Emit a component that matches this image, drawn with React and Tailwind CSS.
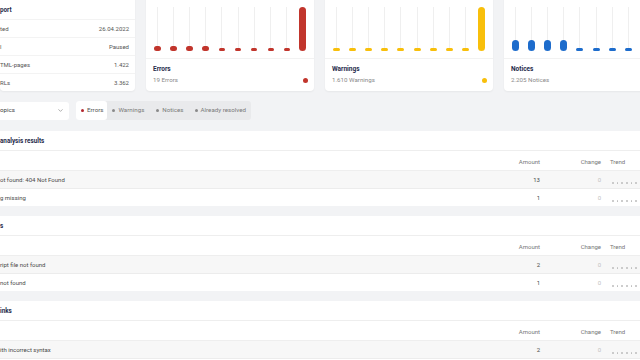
import { ChevronDown } from 'lucide-react';

const errorBars = [
  { h: 5, w: 7 }, { h: 5, w: 7 }, { h: 5, w: 7 }, { h: 5, w: 7 },
  { h: 3, w: 6 }, { h: 3, w: 6 }, { h: 3, w: 6 }, { h: 3, w: 6 }, { h: 3, w: 6 },
  { h: 44, w: 7 },
];
const warningBars = [
  { h: 3, w: 7 }, { h: 3, w: 7 }, { h: 3, w: 7 }, { h: 3, w: 7 }, { h: 3, w: 7 },
  { h: 3, w: 7 }, { h: 3, w: 7 }, { h: 3, w: 7 }, { h: 3, w: 7 },
  { h: 44, w: 7 },
];
const noticeBars = [
  { h: 11, w: 7 }, { h: 11, w: 7 }, { h: 11, w: 7 }, { h: 11, w: 7 },
  { h: 3, w: 7 }, { h: 3, w: 7 }, { h: 3, w: 7 }, { h: 3, w: 7 }, { h: 3, w: 7 }, { h: 3, w: 7 },
];

const sections = [
  {
    title: 'analysis results',
    rows: [
      { label: 'ot found: 404 Not Found', amount: 13, change: 0 },
      { label: 'g missing', amount: 1, change: 0 },
    ],
  },
  {
    title: 's',
    rows: [
      { label: 'ript file not found', amount: 2, change: 0 },
      { label: 'not found', amount: 1, change: 0 },
    ],
  },
  {
    title: 'inks',
    rows: [
      { label: 'ith incorrect syntax', amount: 2, change: 0 },
      { label: '', amount: '', change: '' },
    ],
  },
];

function Bars({ data, color }) {
  return (
    <div className="flex justify-between px-[7.5px] mt-[15px] pb-[7px] border-b border-[#f2f2f2]">
      {data.map((b, i) => (
        <div key={i} className="relative w-[7px] h-[44px] flex flex-col justify-end items-center">
          <div className="absolute top-0 bottom-[2px] left-[3px] w-px bg-[#efefef]" />
          <div className={`relative rounded-full ${color}`} style={{ height: b.h, width: b.w }} />
        </div>
      ))}
    </div>
  );
}

function StatCard({ title, sub, bars, color }) {
  return (
    <div className="w-[168px] h-[99px] shrink-0 bg-white rounded-[4px] shadow-[0_1px_2px_rgba(0,0,0,0.05)]">
      <Bars data={bars} color={color} />
      <div className="flex items-end justify-between pl-[7px] pr-[6.5px] pt-[5px]">
        <div>
          <div className="text-[6.5px] font-bold leading-[11px] text-[#1f2b4b]">{title}</div>
          <div className="text-[6.2px] leading-[11px] text-[#8a8a8a]">{sub}</div>
        </div>
        <span className={`w-[5px] h-[5px] rounded-full mb-[3px] ${color}`} />
      </div>
    </div>
  );
}

function TrendDots() {
  return (
    <div className="flex gap-[3.2px] mt-[7px] ml-[2px]">
      {[0, 1, 2, 3, 4, 5].map((i) => (
        <span key={i} className="w-[1.5px] h-[1.5px] rounded-full bg-[#bdbdbd]" />
      ))}
    </div>
  );
}

function Section({ title, rows }) {
  return (
    <div className="bg-white">
      <div className="h-[20px] flex items-center pt-[3px] border-b border-[#eeeeee] text-[6.3px] font-bold text-[#1f2b4b]">
        {title}
      </div>
      <div className="h-[20px] flex items-center pt-[2px] border-b border-[#eeeeee] text-[6px] text-[#777]">
        <div className="flex-1" />
        <div className="w-[60px] text-right">Amount</div>
        <div className="w-[61px] text-right">Change</div>
        <div className="w-[39px] pl-[9px]">Trend</div>
      </div>
      {rows.map((r, i) => (
        <div
          key={i}
          className={`h-[17.5px] flex items-center text-[6px] text-[#4a4a4a] ${
            i % 2 === 0 ? 'bg-[#f7f7f7] border-b border-[#ececec]' : 'bg-white'
          }`}
        >
          <div className="flex-1 whitespace-nowrap">{r.label}</div>
          <div className="w-[60px] text-right">{r.amount}</div>
          <div className="w-[61px] text-right text-[#c2c2c2]">{r.change}</div>
          <div className="w-[39px] pl-[9px] self-stretch flex items-center">
            {r.label && <TrendDots />}
          </div>
        </div>
      ))}
    </div>
  );
}

export default function App() {
  return (
    <div className="w-[640px] h-[360px] overflow-hidden bg-[#f2f3f5] font-['Roboto',sans-serif] flex flex-col">
      <div className="flex gap-[11px] -mt-[8px] shrink-0">
        <div className="w-[135px] h-[99px] shrink-0 bg-white rounded-[4px] pt-[12px] shadow-[0_1px_2px_rgba(0,0,0,0.05)]">
          <div className="h-[15px] text-[6.3px] font-bold leading-[12px] text-[#1f2b4b]">port</div>
          {[
            ['ted', '26.04.2022'],
            ['l', 'Paused'],
            ['TML-pages', '1.422'],
            ['RLs', '3.362'],
          ].map(([k, v]) => (
            <div key={k} className="h-[18px] flex items-center justify-between pr-[6px] border-t border-[#f3f3f3] text-[6px] text-[#555]">
              <span>{k}</span>
              <span>{v}</span>
            </div>
          ))}
        </div>
        <StatCard title="Errors" sub="19 Errors" bars={errorBars} color="bg-[#c1352c]" />
        <StatCard title="Warnings" sub="1.610 Warnings" bars={warningBars} color="bg-[#f8bf0b]" />
        <StatCard title="Notices" sub="2.205 Notices" bars={noticeBars} color="bg-[#1d6ccc]" />
      </div>

      <div className="flex items-center gap-[7px] mt-[10px] shrink-0">
        <div className="w-[69px] h-[18px] bg-white rounded-r-[3px] flex items-center justify-between pr-[5px] text-[6.2px] text-[#444]">
          <span>opics</span>
          <ChevronDown size={7} strokeWidth={2} className="text-[#777]" />
        </div>
        <div className="h-[19px] bg-[#e9eaec] rounded-[3px] flex items-stretch text-[6.2px] text-[#7a7a7a]">
          <div className="bg-white rounded-[3px] flex items-center gap-[3px] pl-[5px] pr-[4px]">
            <span className="w-[3px] h-[3px] rounded-full bg-[#b3262e]" />
            <span className="text-[#555]">Errors</span>
          </div>
          <div className="flex items-center gap-[3px] pl-[5px] pr-[6px]">
            <span className="w-[3px] h-[3px] rounded-full bg-[#8a8a8a]" />
            <span>Warnings</span>
          </div>
          <div className="flex items-center gap-[3px] pl-[6px] pr-[6px]">
            <span className="w-[3px] h-[3px] rounded-full bg-[#8a8a8a]" />
            <span>Notices</span>
          </div>
          <div className="flex items-center gap-[3px] pl-[5px] pr-[5px]">
            <span className="w-[3px] h-[3px] rounded-full bg-[#8a8a8a]" />
            <span>Already resolved</span>
          </div>
        </div>
      </div>

      <div className="flex flex-col gap-[10px] mt-[11px]">
        {sections.map((s) => (
          <Section key={s.title} title={s.title} rows={s.rows} />
        ))}
      </div>
    </div>
  );
}
